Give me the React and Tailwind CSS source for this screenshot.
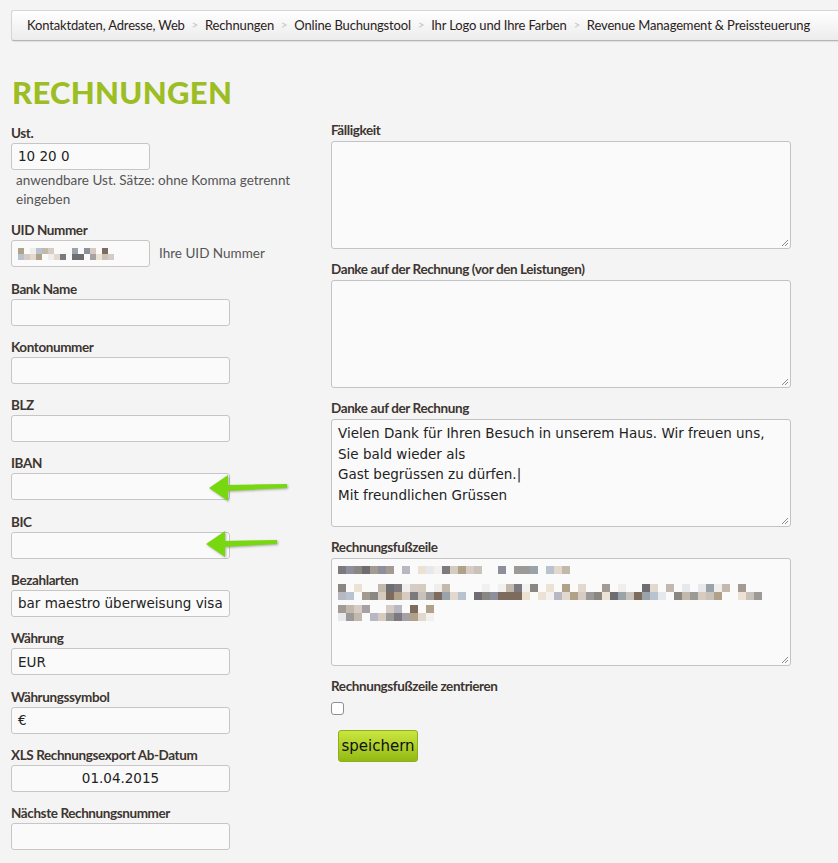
import { useMemo } from 'react';

const crumbs = [
  "Kontaktdaten, Adresse, Web",
  "Rechnungen",
  "Online Buchungstool",
  "Ihr Logo und Ihre Farben",
  "Revenue Management & Preissteuerung",
];

const pixelPalette = [
  "#c9c2bb", "#b9c3cf", "#d6cbbf", "#9c9a98", "#ece2d4", "#d7ccc5", "#7c7a7f",
  "#a39a93", "#7d6b5d", "#f0eeec", "#b0a289", "#9aa2aa", "#c2b8ac", "#8a8682",
  "#e2d8ce", "#a7a0a4", "#f3f1ef", "#e6e8ec", "#b8b8c4", "#8e8f9c", "#6e6d72",
];

// deterministic "blurred" pixel rows
function PixelRow({ count, size, seed, fade = 0.35 }) {
  const cells = useMemo(() => {
    let s = seed;
    const out = [];
    for (let i = 0; i < count; i++) {
      s = (s * 9301 + 49297) % 233280;
      const r = s / 233280;
      s = (s * 9301 + 49297) % 233280;
      const r2 = s / 233280;
      out.push(r2 < fade ? "transparent" : pixelPalette[Math.floor(r * pixelPalette.length)]);
    }
    return out;
  }, [count, seed, fade]);
  return (
    <div className="flex">
      {cells.map((c, i) => (
        <span key={i} className="block" style={{ width: size, height: size, background: c }} />
      ))}
    </div>
  );
}

function Label({ children }) {
  return (
    <div className="h-[16px] leading-[16px] text-[13.5px] font-bold text-[#3d3530] tracking-[-0.4px] whitespace-nowrap [font-family:Lato,sans-serif]">
      {children}
    </div>
  );
}

function Input({ value = "", wide = true, center = false, children }) {
  return (
    <div
      className={`h-[27px] ${wide ? "w-[219px]" : "w-[139px]"} mt-[2px] rounded-[3px] border border-[#c9c5c5] bg-[#fafafa] px-[6px] flex items-center text-[13.5px] text-[#222] [font-family:'DejaVu_Sans',sans-serif] ${center ? "justify-center" : ""}`}
    >
      {children || value}
    </div>
  );
}

function Field({ label, value, wide = true, center = false }) {
  return (
    <div className="mb-[13.3px]">
      <Label>{label}</Label>
      <Input value={value} wide={wide} center={center} />
    </div>
  );
}

function Textarea({ children }) {
  return (
    <div className="relative mt-[3px] h-[108px] w-[460px] rounded-[3px] border border-[#c3c3c3] bg-[#fafafa] px-[6px] py-[3px] text-[13.5px] leading-[20.7px] text-[#222] [font-family:'DejaVu_Sans',sans-serif]">
      {children}
      <svg className="absolute right-[1px] bottom-[1px]" width="9" height="9" viewBox="0 0 9 9">
        <path d="M8 2L2 8M8 5L5 8" stroke="#8a8a8a" strokeWidth="1" />
      </svg>
    </div>
  );
}

// green annotation arrow pointing left; tip at (2,16)
function Arrow({ className, length = 78 }) {
  const end = length + 2;
  return (
    <svg className={className} width={end + 6} height="34" viewBox={`0 0 ${end + 6} 34`}>
      <g fill="#78d80f" style={{ filter: "drop-shadow(1px 1.5px 1px rgba(0,0,0,0.3))" }}>
        <polygon points="2,16 21,3 21,29" />
        <polygon points={`19,13 ${end},12 ${end},16 19,19`} />
      </g>
    </svg>
  );
}

export default function App() {
  return (
    <div className="min-h-[863px] bg-[#f4f4f4] pt-[10px] [font-family:Lato,sans-serif]">
      <div className="ml-[11px] flex h-[31px] items-center rounded-l-[3px] border border-r-0 border-[#d6d6d6] border-b-[#b5b5b5] bg-gradient-to-b from-white to-[#ececec] pl-[15px] text-[13px] tracking-[-0.15px] text-[#2a2220] shadow-[0_1px_1px_rgba(0,0,0,0.08)] whitespace-nowrap overflow-hidden">
        {crumbs.map((c, i) => (
          <span key={c} className="flex items-center">
            {i > 0 && <span className="mx-[7px] text-[11px] text-[#c4c4c4]">&gt;</span>}
            <span>{c}</span>
          </span>
        ))}
      </div>

      <h1 className="ml-[12px] mt-[33px] text-[31px] leading-[36px] font-black text-[#9cbd24] tracking-[0.3px]">
        RECHNUNGEN
      </h1>

      <div className="mt-[12px] ml-[11px] grid grid-cols-[320px_1fr]">
        {/* left column */}
        <div className="relative pt-[3px]">
          <div>
            <Label>Ust.</Label>
            <Input value="10 20 0" wide={false} />
            <p className="ml-[5px] mt-[1px] mb-[13px] text-[13.5px] leading-[19px] text-[#555]">
              anwendbare Ust. Sätze: ohne Komma getrennt
              <br />
              eingeben
            </p>
          </div>
          <div className="mb-[13.5px]">
            <Label>UID Nummer</Label>
            <div className="flex items-center">
              <Input wide={false}>
                <div className="flex flex-col">
                  <PixelRow count={16} size={6} seed={7} fade={0.3} />
                  <PixelRow count={16} size={6} seed={21} fade={0.25} />
                </div>
              </Input>
              <span className="ml-[9px] mt-[2px] text-[13.5px] text-[#555]">Ihre UID Nummer</span>
            </div>
          </div>
          <Field label="Bank Name" />
          <Field label="Kontonummer" />
          <Field label="BLZ" />
          <Field label="IBAN" />
          <Field label="BIC" />
          <Field label="Bezahlarten" value="bar maestro überweisung visa" />
          <Field label="Währung" value="EUR" />
          <Field label="Währungssymbol" value="€" />
          <Field label="XLS Rechnungsexport Ab-Datum" value="01.04.2015" center />
          <Field label="Nächste Rechnungsnummer" />

          <Arrow className="absolute left-[196px] top-[350px]" length={78} />
          <Arrow className="absolute left-[193px] top-[406px]" length={71} />
        </div>

        {/* right column */}
        <div>
          <div className="mb-[12px]">
            <Label>Fälligkeit</Label>
            <Textarea />
          </div>
          <div className="mb-[12px]">
            <Label>Danke auf der Rechnung (vor den Leistungen)</Label>
            <Textarea />
          </div>
          <div className="mb-[12px]">
            <Label>Danke auf der Rechnung</Label>
            <Textarea>
              Vielen Dank für Ihren Besuch in unserem Haus. Wir freuen uns,
              <br />
              Sie bald wieder als
              <br />
              Gast begrüssen zu dürfen.|
              <br />
              Mit freundlichen Grüssen
            </Textarea>
          </div>
          <div className="mb-[12px]">
            <Label>Rechnungsfußzeile</Label>
            <Textarea>
              <div className="pt-[4px] flex flex-col">
                <PixelRow count={29} size={8} seed={3} fade={0.2} />
                <div className="h-[10px]" />
                <PixelRow count={53} size={8} seed={11} fade={0.45} />
                <PixelRow count={53} size={8} seed={17} fade={0.15} />
                <div className="h-[5px]" />
                <PixelRow count={12} size={8} seed={29} fade={0.2} />
                <PixelRow count={12} size={8} seed={41} fade={0.2} />
              </div>
            </Textarea>
          </div>
          <Label>Rechnungsfußzeile zentrieren</Label>
          <div className="mt-[8px] h-[13px] w-[13px] rounded-[3px] border border-[#8f8f8f] bg-white" />
          <button className="ml-[7px] mt-[15px] h-[32px] w-[80px] rounded-[3px] border border-[#8fae18] bg-gradient-to-b from-[#cbe63f] to-[#92ba10] text-[15px] text-[#111] [font-family:'DejaVu_Sans',sans-serif]">
            speichern
          </button>
        </div>
      </div>
    </div>
  );
}
